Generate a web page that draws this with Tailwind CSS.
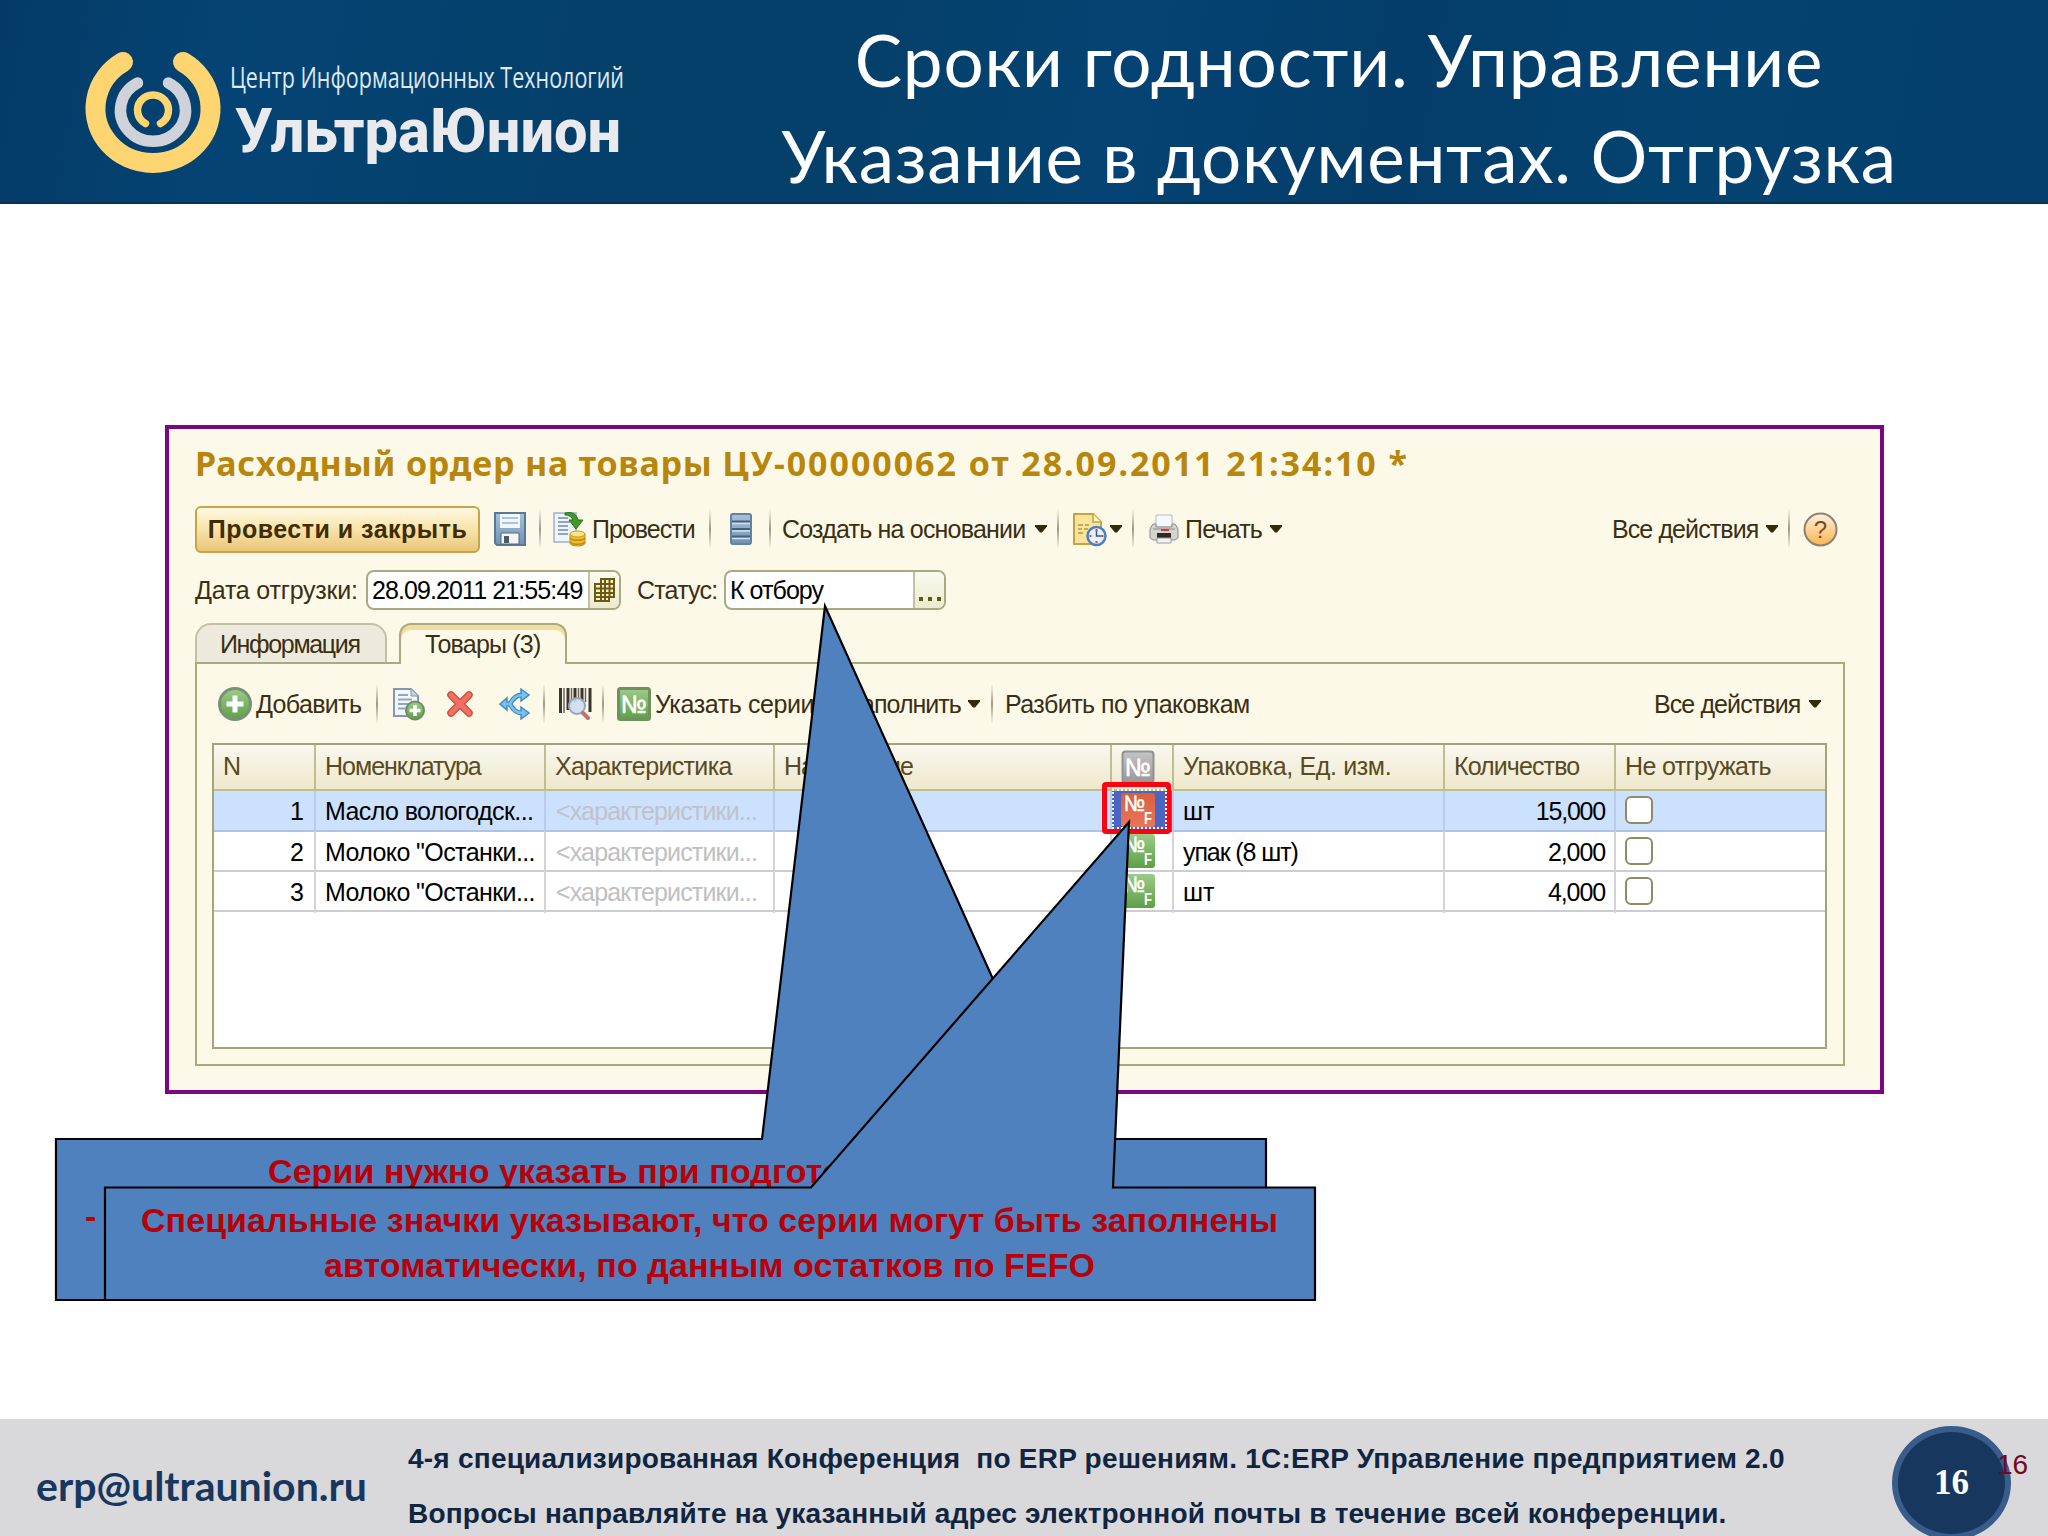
<!DOCTYPE html>
<html lang="ru">
<head>
    <meta charset="UTF-8">
    <meta name="viewport" content="width=device-width, initial-scale=1">
    <title>Сроки годности. Управление</title>
    <script src="https://cdn.jsdelivr.net/npm/@tailwindcss/browser@4"></script>
</head>
<body class="bg-white">

<!-- Shared icons -->
<svg class="absolute w-0 h-0">
    <defs>
        <linearGradient id="g-green" x1="0" y1="0" x2="0" y2="1"><stop offset="0" stop-color="#9ccb8a"/><stop offset="1" stop-color="#5da045"/></linearGradient>
        <linearGradient id="g-red" x1="0" y1="0" x2="0" y2="1"><stop offset="0" stop-color="#d9603f"/><stop offset="1" stop-color="#e8765a"/></linearGradient>
        <linearGradient id="g-gray" x1="0" y1="0" x2="0" y2="1"><stop offset="0" stop-color="#c4c4c4"/><stop offset="1" stop-color="#989898"/></linearGradient>
        <linearGradient id="g-blue" x1="0" y1="0" x2="0" y2="1"><stop offset="0" stop-color="#a9c3d8"/><stop offset="1" stop-color="#6d93b3"/></linearGradient>
        <linearGradient id="g-orange" x1="0" y1="0" x2="0" y2="1"><stop offset="0" stop-color="#fdf0e2"/><stop offset="1" stop-color="#fbb54e"/></linearGradient>
    </defs>
    <symbol id="i-arrow" viewBox="0 0 12 8"><path d="M0 0h12v1.500L7 7.500H5L0 1.500z" fill="#33290c"/></symbol>
    <symbol id="i-nf" viewBox="0 0 34 34">
        <text x="3" y="18" font-size="22" textLength="21" lengthAdjust="spacingAndGlyphs" fill="#fff" stroke="#fff" stroke-width=".6" font-family="Liberation Sans, sans-serif">№</text>
        <text x="23" y="31" font-size="16" font-weight="bold" textLength="8" lengthAdjust="spacingAndGlyphs" fill="#fff" font-family="Liberation Sans, sans-serif">F</text>
    </symbol>
</svg>

<div class="relative w-[2048px] h-[1536px] overflow-hidden flex flex-col font-['Liberation_Sans',Arial,sans-serif]">

    <!-- Header -->
    <header class="h-[204px] shrink-0 flex bg-[linear-gradient(100deg,#053a66_0%,#044474_12%,#04406b_28%,#044069_42%,#044374_55%,#043d69_68%,#044371_82%,#043e6c_100%)] border-b-2 border-[#03325a]">
        <svg class="w-[680px] h-[202px] shrink-0" viewBox="0 0 680 202">
            <path d="M123 62A57.500 54.500 0 1 0 183 62" fill="none" stroke="#fed570" stroke-width="20" stroke-linecap="round"/>
            <path d="M137.500 83A32.500 31 0 1 0 168.500 83" fill="none" stroke="#cfd3d9" stroke-width="11.500" stroke-linecap="round"/>
            <path d="M145.500 123.500A15.500 15.200 0 1 1 160.500 123.500" fill="none" stroke="#fed570" stroke-width="7.500" stroke-linecap="round"/>
            <text x="230" y="88" textLength="394" lengthAdjust="spacingAndGlyphs" font-family="Open Sans, sans-serif" font-size="29" fill="#dfe8f2">Центр Информационных Технологий</text>
            <text x="235" y="152" textLength="386" lengthAdjust="spacingAndGlyphs" font-family="Roboto, sans-serif" font-weight="800" font-size="62" fill="#e9eaee">УльтраЮнион</text>
        </svg>
        <h1 class="w-[1318px] pt-[12px] text-center text-white text-[71px] leading-[96px] tracking-[0.85px] font-[Lato,sans-serif] whitespace-nowrap">Сроки годности. Управление<br><span class="tracking-[0.65px]">Указание в документах. Отгрузка</span></h1>
    </header>

    <main class="flex-1 pt-[221px] pl-[165px]">
        <!-- Document window -->
        <section class="w-[1719px] h-[669px] border-4 border-[#7a0682] bg-[#fcf9e9] pl-[26px] text-[25px] leading-[30px] text-[#3a2f12] whitespace-nowrap">
            <h2 class="h-[68px] pt-[19px] text-[34px] font-bold text-[#b9860c] font-['Noto_Sans',sans-serif]"><span class="tracking-[0.8px]">Расходный ордер на товары </span><span class="tracking-[1.95px]">ЦУ-00000062 от 28.09.2011 21:34:10 *</span></h2>

            <!-- Command bar -->
            <div class="h-[64px] flex items-center">
                <button class="w-[285px] h-[47px] rounded-md border-2 border-[#c9a447] bg-linear-to-b from-[#fff9e4] via-[#f8e3a8] to-[#e9c67c] font-bold tracking-[0.5px] text-[#3f2d05]">Провести и закрыть</button>
                <svg class="ml-[14px] w-[32px] h-[34px]" viewBox="0 0 32 34">
                    <path d="M1 1h30v32H3l-2-2z" fill="url(#g-blue)" stroke="#587894" stroke-width="2"/>
                    <path d="M6 2h20v14H6z" fill="#f2f7fb"/><path d="M8 6h16M8 11h16" stroke="#a8c4e0" stroke-width="2"/>
                    <path d="M7 21h18v11H7z" fill="#f4f4f4" stroke="#52697c"/><path d="M10 24h5v7h-5z" fill="#4b5a66"/>
                </svg>
                <div class="ml-[13px] w-[2px] h-[40px] bg-linear-to-b from-transparent via-[#9c9a84] to-transparent"></div>
                <svg class="ml-[12px] w-[33px] h-[36px]" viewBox="0 0 33 36">
                    <path d="M1 2h22v29H1z" fill="#eef4fa" stroke="#9db2c6" stroke-width="1.500"/>
                    <path d="M5 7h10M5 11h12M5 15h10M5 19h10M5 23h10" stroke="#8fa6bd" stroke-width="2"/>
                    <path d="M12 2c8-2 12 2 13 7h5l-7 9-7-9h4c-1-3-4-5-8-5z" fill="#3f9a2c" stroke="#287619"/>
                    <path d="M17 23v9c0 4 15 4 15 0v-9z" fill="#efbd32" stroke="#c08f14"/><path d="M17 27c2 3 13 3 15 0M17 31c2 3 13 3 15 0" fill="none" stroke="#c08f14" stroke-width="1.500"/>
                    <ellipse cx="24.500" cy="23" rx="7.500" ry="3" fill="#fbe48b" stroke="#c9991f"/>
                </svg>
                <span class="ml-[6px] w-[103px] tracking-[-1px]">Провести</span>
                <div class="ml-[14px] w-[2px] h-[40px] bg-linear-to-b from-transparent via-[#9c9a84] to-transparent"></div>
                <svg class="ml-[19px] w-[22px] h-[32px]" viewBox="0 0 22 32">
                    <rect x="1" y="1" width="20" height="30" rx="2" fill="url(#g-blue)" stroke="#64829c" stroke-width="2"/>
                    <path d="M2 8.500h18M2 16h18M2 23.500h18" stroke="#40607c" stroke-width="2"/><path d="M2 10.500h18M2 18h18M2 25.500h18" stroke="#cfdfec" stroke-width="1.500"/>
                </svg>
                <div class="ml-[17px] w-[2px] h-[40px] bg-linear-to-b from-transparent via-[#9c9a84] to-transparent"></div>
                <span class="ml-[11px] w-[244px] tracking-[-0.8px]">Создать на основании</span>
                <svg class="ml-[9px] w-[12px] h-[8px]"><use href="#i-arrow"/></svg>
                <div class="ml-[10px] w-[2px] h-[40px] bg-linear-to-b from-transparent via-[#9c9a84] to-transparent"></div>
                <svg class="ml-[14px] w-[34px] h-[36px]" viewBox="0 0 34 36">
                    <path d="M1 3h19l8 8v22H1z" fill="#f8e49c" stroke="#c9a23c" stroke-width="2"/><path d="M20 3v8h8" fill="#fff6cf" stroke="#c9a23c" stroke-width="1.500"/>
                    <path d="M5 14h5M12 14h4M5 18h4M11 18h4M5 22h5" stroke="#c8a954" stroke-width="2"/>
                    <circle cx="23.500" cy="25" r="9" fill="#e6f1fd" stroke="#4c80bd" stroke-width="2.500"/>
                    <path d="M23.500 18v2M23.500 30v2M16.500 25h2M28.500 25h2" stroke="#c44" stroke-width="2"/><path d="M23.500 20v5h5" fill="none" stroke="#34588c" stroke-width="1.500"/>
                </svg>
                <svg class="ml-[3px] w-[12px] h-[8px]"><use href="#i-arrow"/></svg>
                <div class="ml-[10px] w-[2px] h-[40px] bg-linear-to-b from-transparent via-[#9c9a84] to-transparent"></div>
                <svg class="ml-[15px] w-[30px] h-[30px]" viewBox="0 0 30 30">
                    <path d="M7 1h16v12H7z" fill="#f5f8fc" stroke="#b5bcc6"/>
                    <path d="M4 10h3v3h16v-3h3l3 5v9l-3 2H4l-3-2v-9z" fill="#d5d3d0" stroke="#8f8b88"/>
                    <path d="M4 15h22" stroke="#b3afad" stroke-width="2"/><path d="M12 16h8" stroke="#d33" stroke-width="2"/>
                    <path d="M8 19h14v5H8z" fill="#2d2a2a"/><path d="M8 24h14v5H8z" fill="#f2f3f5" stroke="#9a9a9a"/>
                </svg>
                <span class="ml-[6px] w-[76px] tracking-[-0.8px]">Печать</span>
                <svg class="ml-[9px] w-[12px] h-[8px]"><use href="#i-arrow"/></svg>
                <span class="ml-[330px] w-[145px] tracking-[-0.9px]">Все действия</span>
                <svg class="ml-[9px] w-[12px] h-[8px]"><use href="#i-arrow"/></svg>
                <div class="ml-[10px] w-[2px] h-[40px] bg-linear-to-b from-transparent via-[#9c9a84] to-transparent"></div>
                <svg class="ml-[13px] w-[35px] h-[35px]" viewBox="0 0 35 35">
                    <circle cx="17.500" cy="17.500" r="16" fill="url(#g-orange)" stroke="#8d8170" stroke-width="2"/>
                    <text x="17.500" y="26" text-anchor="middle" font-size="24" fill="#7c4a22" font-family="Liberation Sans, sans-serif">?</text>
                </svg>
            </div>

            <!-- Header fields -->
            <div class="h-[58px] flex items-center">
                <span class="w-[171px] tracking-[-0.2px]">Дата отгрузки:</span>
                <div class="w-[255px] h-[40px] flex border-2 border-[#a9a982] rounded-lg bg-white overflow-hidden text-black">
                    <span class="w-[220px] pl-[4px] pt-[3px] tracking-[-0.9px]">28.09.2011 21:55:49</span>
                    <div class="flex-1 border-l-2 border-[#c3c1a0] bg-linear-to-b from-[#fbfaf0] to-[#ecebcf] flex items-center justify-center">
                        <svg class="w-[21px] h-[24px]" viewBox="0 0 21 24"><path d="M7 1h13v18h-5v4H1V6h6z" fill="#f4eecb" stroke="#6d5a12" stroke-width="2"/><path d="M7 6h13M1 10.500h19M1 15h19M1 19h14M7 1v22M11 1v22M15.500 1v18" stroke="#6d5a12" stroke-width="2"/></svg>
                    </div>
                </div>
                <span class="ml-[16px] w-[87px] tracking-[-0.8px]">Статус:</span>
                <div class="w-[222px] h-[40px] flex border-2 border-[#a9a982] rounded-lg bg-white overflow-hidden text-black">
                    <span class="w-[187px] pl-[4px] pt-[3px] tracking-[-0.95px]">К отбору</span>
                    <div class="flex-1 border-l-2 border-[#c3c1a0] bg-linear-to-b from-[#fbfaf0] to-[#ecebcf] flex items-end justify-center gap-[5px] pb-[7px]">
                        <i class="size-[4px] bg-[#5d5a12]"></i><i class="size-[4px] bg-[#5d5a12]"></i><i class="size-[4px] bg-[#5d5a12]"></i>
                    </div>
                </div>
            </div>

            <!-- Tabs -->
            <div class="h-[45px] -mb-[2px] pt-[4px] flex relative">
                <div class="w-[192px] h-[39px] border-2 border-b-0 border-[#c2c1a8] rounded-t-2xl bg-[#edeadd] pl-[23px] pt-[4px] tracking-[-1.35px]">Информация</div>
                <div class="ml-[12px] w-[168px] h-[41px] border-2 border-b-0 border-[#a9a982] rounded-t-xl bg-[#fcf9e9] overflow-hidden shadow-[inset_0_5px_0_#f3dc9c] pl-[24px] pt-[4px] tracking-[-0.8px]">Товары (3)</div>
            </div>

            <!-- Goods tab -->
            <div class="w-[1650px] h-[404px] border-2 border-[#a9a982] pl-[15px]">
                <div class="h-[79px] flex items-center pt-[1px]">
                    <svg class="ml-[6px] w-[34px] h-[34px]" viewBox="0 0 34 34"><circle cx="17" cy="17" r="15.500" fill="url(#g-green)" stroke="#7b8f76" stroke-width="3"/><path d="M17 8.500v17M8.500 17h17" stroke="#fff" stroke-width="5"/></svg>
                    <span class="ml-[4px] w-[106px] tracking-[-0.65px]">Добавить</span>
                    <div class="ml-[14px] w-[2px] h-[40px] bg-linear-to-b from-transparent via-[#9c9a84] to-transparent"></div>
                    <svg class="ml-[14px] w-[34px] h-[34px]" viewBox="0 0 34 34">
                        <path d="M2 2h17l7 7v20H2z" fill="#f3f7fb" stroke="#8398ad" stroke-width="2"/><path d="M19 2v7h7" fill="#c5d3e0" stroke="#8398ad"/>
                        <path d="M6 8h10M6 12.500h14M6 17h12M6 21.500h7" stroke="#8fa6bd" stroke-width="2"/>
                        <circle cx="23" cy="23.500" r="9" fill="url(#g-green)" stroke="#6f8a68" stroke-width="2"/><path d="M23 18v11M17.500 23.500h11" stroke="#fff" stroke-width="3.500"/>
                    </svg>
                    <svg class="ml-[21px] w-[26px] h-[26px]" viewBox="0 0 26 26"><path d="M4 4l18 18M22 4L4 22" stroke="#d9483b" stroke-width="7.500" stroke-linecap="round"/><path d="M4 4l18 18M22 4L4 22" stroke="#ee7164" stroke-width="5" stroke-linecap="round"/></svg>
                    <svg class="ml-[26px] w-[32px] h-[32px]" viewBox="0 0 32 32">
                        <path d="M4 16h7M11 16C14 10 17 7 23 7M11 16c3 6 6 9 12 9" fill="none" stroke="#3f8ec6" stroke-width="5"/>
                        <path d="M22 1l8 6-8 6zM22 19l8 6-8 6zM1 16l7-6v12z" fill="#7cc0ec" stroke="#3f8ec6" stroke-width="1.500"/>
                        <path d="M5 16h6M11 16C14 10 17 7 24 7M11 16c3 6 6 9 13 9" fill="none" stroke="#7cc0ec" stroke-width="2.500"/>
                    </svg>
                    <div class="ml-[12px] w-[2px] h-[40px] bg-linear-to-b from-transparent via-[#9c9a84] to-transparent"></div>
                    <svg class="ml-[14px] w-[33px] h-[34px]" viewBox="0 0 33 34">
                        <path d="M1.500 1v25M9 1v22M16 1v14M23 1v14M31 1v24" stroke="#3a3530" stroke-width="3"/><path d="M5 1v25M12.500 1v14M19.500 1v12M26.500 1v14" stroke="#6a635c" stroke-width="1.500"/>
                        <circle cx="18" cy="19" r="8" fill="#cfdcf1" fill-opacity=".9" stroke="#97a4bb" stroke-width="2"/><path d="M24 26l5 5" stroke="#b5786a" stroke-width="4" stroke-linecap="round"/>
                    </svg>
                    <div class="ml-[10px] w-[2px] h-[40px] bg-linear-to-b from-transparent via-[#9c9a84] to-transparent"></div>
                    <svg class="ml-[13px] w-[34px] h-[34px]" viewBox="0 0 34 34"><rect x="1.500" y="1.500" width="31" height="31" rx="2" fill="url(#g-green)" stroke="#6f9160" stroke-width="3"/><text x="4" y="26" font-size="25" textLength="26" lengthAdjust="spacingAndGlyphs" fill="#fff" stroke="#fff" stroke-width=".7" font-family="Liberation Sans, sans-serif">№</text></svg>
                    <span class="ml-[4px] w-[158px] tracking-[-0.4px]">Указать серии</span>
                    <span class="ml-[34px] w-[112px] tracking-[-1px]">Заполнить</span>
                    <svg class="ml-[9px] w-[12px] h-[8px]"><use href="#i-arrow"/></svg>
                    <div class="ml-[11px] w-[2px] h-[40px] bg-linear-to-b from-transparent via-[#9c9a84] to-transparent"></div>
                    <span class="ml-[12px] w-[244px] tracking-[-0.55px]">Разбить по упаковкам</span>
                    <span class="ml-[405px] w-[146px] tracking-[-0.9px]">Все действия</span>
                    <svg class="ml-[9px] w-[12px] h-[8px]"><use href="#i-arrow"/></svg>
                </div>

                <!-- Goods table -->
                <div class="w-[1615px] h-[306px] border-2 border-[#a3a37c] bg-white text-black">
                    <div class="grid grid-cols-[102px_230px_229px_337px_62px_271px_171px_1fr] h-[46px] border-b-2 border-[#c0bd95] bg-linear-to-b from-[#faf8f0] to-[#eee8cb] text-[#5a4a22] leading-[43px] *:border-r-2 *:border-[#c0bd95] *:pl-[9px]">
                        <div>N</div>
                        <div class="tracking-[-1px]">Номенклатура</div>
                        <div class="tracking-[-0.65px]">Характеристика</div>
                        <div class="tracking-[-1px]">Назначение</div>
                        <div><svg class="mt-[5px] w-[34px] h-[34px]" viewBox="0 0 34 34"><rect x="1.500" y="1.500" width="31" height="31" rx="3" fill="url(#g-gray)" stroke="#929292" stroke-width="2"/><text x="4" y="26" font-size="25" textLength="26" lengthAdjust="spacingAndGlyphs" fill="#fff" stroke="#fff" stroke-width=".7" font-family="Liberation Sans, sans-serif">№</text></svg></div>
                        <div class="tracking-[-0.35px]">Упаковка, Ед. изм.</div>
                        <div class="tracking-[-0.9px]">Количество</div>
                        <div class="tracking-[-0.65px] border-r-0!">Не отгружать</div>
                    </div>
                    <div class="grid grid-cols-[102px_230px_229px_337px_62px_271px_171px_1fr] h-[41px] border-b-2 border-[#afc4e4] bg-[#cbe1fd] leading-[41px] *:border-r-2 *:border-[#b9cde9] *:pl-[9px]">
                        <div class="text-right pr-[10px]">1</div>
                        <div class="tracking-[-0.6px]">Масло вологодск...</div>
                        <div class="tracking-[-0.85px] text-[#bfc3c9] pl-[10px]!">&lt;характеристики...</div>
                        <div></div>
                        <div class="bg-[#4a66c4]"><svg class="mt-[2px] w-[34px] h-[34px]"><rect width="34" height="34" rx="3" fill="url(#g-red)"/><use href="#i-nf"/></svg></div>
                        <div>шт</div>
                        <div class="text-right pr-[9px] tracking-[-1.2px]">15,000</div>
                        <div class="border-r-0! pt-[5px]"><div class="size-[28px] rounded-md border-2 border-[#8d8c66] bg-white"></div></div>
                    </div>
                    <div class="grid grid-cols-[102px_230px_229px_337px_62px_271px_171px_1fr] h-[40px] border-b-2 border-[#cbcdd2] leading-[41px] *:border-r-2 *:border-[#d3d4d9] *:pl-[9px]">
                        <div class="text-right pr-[10px]">2</div>
                        <div class="tracking-[-0.6px]">Молоко "Останки...</div>
                        <div class="tracking-[-0.85px] text-[#c0c0c0] pl-[10px]!">&lt;характеристики...</div>
                        <div></div>
                        <div><svg class="mt-[2px] w-[34px] h-[34px]"><rect width="34" height="34" rx="3" fill="url(#g-green)"/><use href="#i-nf"/></svg></div>
                        <div class="tracking-[-1.1px]">упак (8 шт)</div>
                        <div class="text-right pr-[9px] tracking-[-1.1px]">2,000</div>
                        <div class="border-r-0! pt-[5px]"><div class="size-[28px] rounded-md border-2 border-[#8d8c66] bg-white"></div></div>
                    </div>
                    <div class="grid grid-cols-[102px_230px_229px_337px_62px_271px_171px_1fr] h-[40px] border-b-2 border-[#cbcdd2] leading-[41px] *:border-r-2 *:border-[#d3d4d9] *:pl-[9px]">
                        <div class="text-right pr-[10px]">3</div>
                        <div class="tracking-[-0.6px]">Молоко "Останки...</div>
                        <div class="tracking-[-0.85px] text-[#c0c0c0] pl-[10px]!">&lt;характеристики...</div>
                        <div></div>
                        <div><svg class="mt-[2px] w-[34px] h-[34px]"><rect width="34" height="34" rx="3" fill="url(#g-green)"/><use href="#i-nf"/></svg></div>
                        <div>шт</div>
                        <div class="text-right pr-[9px] tracking-[-1.1px]">4,000</div>
                        <div class="border-r-0! pt-[5px]"><div class="size-[28px] rounded-md border-2 border-[#8d8c66] bg-white"></div></div>
                    </div>
                </div>
            </div>
        </section>
    </main>

    <!-- Footer -->
    <footer class="h-[117px] shrink-0 flex bg-[#d9d8db] whitespace-nowrap">
        <div class="w-[408px] pl-[36px] pt-[43px] font-[Lato,sans-serif] font-bold text-[41px] leading-[48px] text-[#17375e]">erp@ultraunion.ru</div>
        <div class="w-[1484px] pt-[12px] font-bold text-[28px] leading-[55px] text-[#10253f]">
            <p class="whitespace-pre tracking-[0.23px]">4-я специализированная Конференция  по ERP решениям. 1С:ERP Управление предприятием 2.0</p>
            <p class="tracking-[0.2px]">Вопросы направляйте на указанный адрес электронной почты в течение всей конференции.</p>
        </div>
        <div class="mt-[7px] w-[119px] h-[114px] rounded-[50%] border-[6px] border-[#385d8a] bg-[#17375e] text-white text-center font-bold text-[35px] leading-[102px] font-['Liberation_Serif',serif]">16</div>
    </footer>
    <div class="absolute left-[1997px] top-[1449px] text-[28px] leading-[31px] text-[#76071f]">16</div>

    <!-- Selected cell marker and callouts -->
    <div class="absolute left-[1102px] top-[782px] w-[69px] h-[52px] border-[5px] border-[#fa0412] rounded-sm"></div>
    <div class="absolute left-[1112px] top-[789px] w-[55px] h-[40px] border-2 border-dotted border-white"></div>
    <svg class="absolute left-0 top-0 w-[2048px] h-[1536px]" viewBox="0 0 2048 1536" font-family="Liberation Sans, Arial, sans-serif" font-weight="bold" font-size="34">
        <path d="M56 1139H762L825 606L1065 1139H1266V1300H56z" fill="#4f81bf" stroke="#000" stroke-width="2.200"/>
        <text x="268" y="1183" textLength="786" fill="#b80008">Серии нужно указать при подготовке к отбору</text>
        <text x="85" y="1228" fill="#b80008">-</text>
        <path d="M105 1187.500H811L1129 822L1113 1187.500H1315V1300H105z" fill="#4f81bf" stroke="#000" stroke-width="2.200"/>
        <text x="141" y="1232" textLength="1137" fill="#b80008">Специальные значки указывают, что серии могут быть заполнены</text>
        <text x="324" y="1276.500" textLength="771" fill="#b80008">автоматически, по данным остатков по FEFO</text>
    </svg>
</div>
</body>
</html>
